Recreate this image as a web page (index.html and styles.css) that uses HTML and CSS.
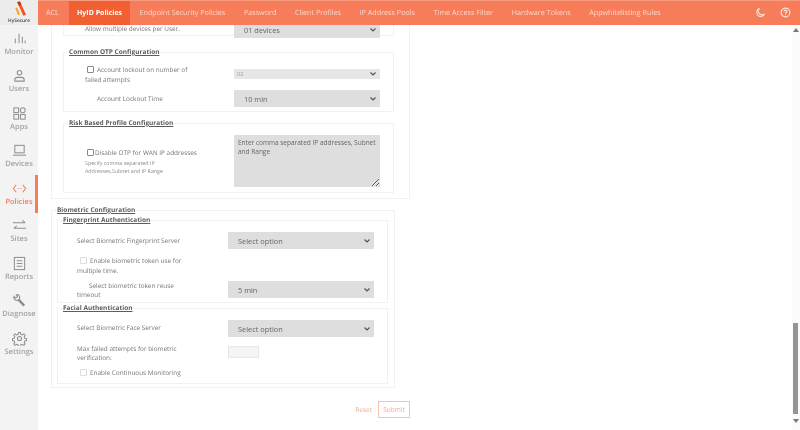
FILE: index.html
```html
<!DOCTYPE html>
<html lang="en">
<head>
<meta charset="utf-8">
<title>HySecure Policies</title>
<link rel="stylesheet" href="styles.css">
</head>
<body>
<div class="app">
  <aside class="sidebar">
    <div class="brand">
      <svg class="logo" viewBox="0 0 20 18"><path d="M7.500 1 10.500 .5 17 14.500 14 15.500 Z" fill="#f0562a"/><path d="M5.500 7.500 7.500 7 10.500 14 8.500 15 Z" fill="#f6a623"/><path d="M7.500 1 10.500 .5 12 4 9.500 5 Z" fill="#b93a18"/></svg>
      <span class="brand-name">HySecure</span>
    </div>
    <nav class="nav">
      <a class="nav-item"><svg viewBox="0 0 16 16"><path d="M3.500 13V8M7.500 13V3M11 13V6M14 13v-3"/></svg><span>Monitor</span></a>
      <a class="nav-item"><svg viewBox="0 0 16 16"><circle cx="8" cy="5" r="2.400"/><path d="M3 14v-1.500c0-1.500 1.500-2.500 3-2.500h4c1.500 0 3 1 3 2.500V14zM3 14h10"/></svg><span>Users</span></a>
      <a class="nav-item"><svg viewBox="0 0 16 16"><rect x="2" y="2" width="5" height="5"/><circle cx="11.500" cy="4.500" r="2.600"/><rect x="2" y="9" width="5" height="5"/><rect x="9" y="9" width="5" height="5"/></svg><span>Apps</span></a>
      <a class="nav-item"><svg viewBox="0 0 16 16"><rect x="3" y="2.500" width="10" height="8"/><path d="M1 13h14"/></svg><span>Devices</span></a>
      <a class="nav-item active"><svg viewBox="0 0 16 16"><path d="M4.500 4 1.500 8l3 4M11.500 4l3 4-3 4M6 8h1M9 8h1"/></svg><span>Policies</span></a>
      <a class="nav-item"><svg viewBox="0 0 16 16"><path d="M1 5h13M11 2.500 14 5M15 11H2M5 8.500 2 11"/></svg><span>Sites</span></a>
      <a class="nav-item"><svg viewBox="0 0 16 16"><rect x="2.500" y="1.500" width="11" height="13"/><path d="M5 5h6M5 8h6M5 11h6"/></svg><span>Reports</span></a>
      <a class="nav-item"><svg viewBox="0 0 16 16"><path class="thick" d="M7 7l6 6.500"/><path d="M2 3.500 4 5.500 6 4 4.500 2C7 1 9 3.500 8 6L6 8C3.500 8.500 1.500 6 2 3.500Z"/></svg><span>Diagnose</span></a>
      <a class="nav-item"><svg viewBox="0 0 16 16"><circle cx="8" cy="8" r="2.200"/><path d="M7 1.500h2l.4 2 1.600.7 1.700-1.100 1.400 1.400-1.100 1.700.7 1.600 1.800.4v2l-1.800.4-.7 1.600 1.100 1.700-1.400 1.400-1.700-1.100-1.600.7-.4 1.800H7l-.4-1.800-1.600-.7-1.700 1.100-1.400-1.400 1.100-1.700-.7-1.600-1.800-.4v-2l1.800-.4.7-1.600-1.100-1.700 1.400-1.400 1.700 1.100 1.600-.7z"/></svg><span>Settings</span></a>
    </nav>
  </aside>
  <div class="workspace">
    <header class="topbar">
      <nav class="tabs">
        <a class="tab">ACL</a>
        <a class="tab current">HyID Policies</a>
        <a class="tab">Endpoint Security Policies</a>
        <a class="tab">Password</a>
        <a class="tab">Client Profiles</a>
        <a class="tab">IP Address Pools</a>
        <a class="tab">Time Access Filter</a>
        <a class="tab">Hardware Tokens</a>
        <a class="tab">Appwhitelisting Rules</a>
      </nav>
      <div class="top-icons">
        <svg viewBox="0 0 12 12"><path d="M5 1.500A4.500 4.500 0 1 0 10.500 7.500 4 4 0 0 1 5 1.500Z"/></svg>
        <svg viewBox="0 0 12 12"><circle cx="6" cy="6" r="4.800"/><path d="M4.500 4.800C4.500 3 7.600 3 7.600 4.800 7.600 6 6 6 6 7.300M6 8.300v.8"/></svg>
      </div>
    </header>
    <main class="content">
      <div class="form-scroll">
        <section class="outer first">
          <fieldset class="group clipped">
            <div class="row row-clipped">
              <label class="label">Allow multiple devices per User.</label>
              <select class="control"><option>01 devices</option></select>
            </div>
          </fieldset>
          <fieldset class="group otp">
            <legend>Common OTP Configuration</legend>
            <div class="row row-lockout">
              <label class="label"><input type="checkbox" class="check">Account lockout on number of<br>failed attempts</label>
              <select class="control small" disabled><option>02</option></select>
            </div>
            <div class="row row-time">
              <label class="label pad">Account Lockout Time</label>
              <select class="control"><option>10 min</option></select>
            </div>
          </fieldset>
          <fieldset class="group risk">
            <legend>Risk Based Profile Configuration</legend>
            <div class="row row-risk">
              <div class="label">
                <label class="wan"><input type="checkbox" class="check tight">Disable OTP for WAN IP addresses</label>
                <p class="hint">Specify comma separated IP<br>Addresses,Subnet and IP Range</p>
              </div>
              <textarea class="control area" placeholder="Enter comma separated IP addresses, Subnet and Range"></textarea>
            </div>
          </fieldset>
        </section>
        <fieldset class="outer bio">
          <legend>Biometric Configuration</legend>
          <fieldset class="group finger">
            <legend>Fingerprint Authentication</legend>
            <div class="row row-server">
              <label class="label">Select Biometric Fingerprint Server</label>
              <select class="control"><option>Select option</option></select>
            </div>
            <div class="row row-token">
              <label class="label"><input type="checkbox" class="check faded">Enable biometric token use for<br>multiple time.</label>
            </div>
            <div class="row row-reuse">
              <label class="label"><span class="indent">Select biometric token reuse</span><br>timeout</label>
              <select class="control"><option>5 min</option></select>
            </div>
          </fieldset>
          <fieldset class="group face">
            <legend>Facial Authentication</legend>
            <div class="row row-face">
              <label class="label">Select Biometric Face Server</label>
              <select class="control"><option>Select option</option></select>
            </div>
            <div class="row row-max">
              <label class="label">Max failed attempts for biometric<br>verification:</label>
              <input type="text" class="number">
            </div>
            <div class="row row-cont">
              <label class="label"><input type="checkbox" class="check faded">Enable Continuous Monitoring</label>
            </div>
          </fieldset>
        </fieldset>
        <div class="actions">
          <a class="reset">Reset</a>
          <button class="submit" type="button">Submit</button>
        </div>
      </div>
      <div class="scrollbar">
        <span class="arrow up"></span>
        <span class="thumb"></span>
        <span class="arrow down"></span>
      </div>
    </main>
  </div>
</div>
</body>
</html>
```
FILE: styles.css
```css
* { box-sizing: border-box; }
html, body { margin: 0; height: 100%; background: #fff; overflow: hidden; }
body { font-family: "Open Sans", "Noto Sans", sans-serif; font-size: 6.400px; color: #757575; text-rendering: geometricPrecision; }
.app { display: flex; width: 800px; height: 430px; filter: blur(0.4px); }

.sidebar { width: 38px; flex: none; background: #f3f3f3; display: flex; flex-direction: column; }
.brand { height: 25px; background: #ececec; display: flex; flex-direction: column; align-items: center; justify-content: flex-end; padding-bottom: 1px; }
.logo { width: 19px; height: 17px; }
.brand-name { font-size: 4.800px; line-height: 6px; color: #444; font-weight: 600; }
.nav { display: flex; flex-direction: column; }
.nav-item { height: 37.5px; display: flex; flex-direction: column; align-items: center; padding-top: 5.500px; font-size: 7.500px; line-height: 11px; color: #a3a3a3; font-weight: 600; position: relative; gap: 1px; white-space: nowrap; }
.nav-item svg { width: 15px; height: 15px; fill: none; stroke: #8f8f8f; stroke-width: 1.100; }
.nav-item svg .thick { stroke-width: 2.600; }
.nav-item.active { color: #f67c5a; }
.nav-item.active svg { stroke: #f67c5a; }
.nav-item.active::after { content: ""; position: absolute; right: 0; top: 0; width: 3px; height: 38px; background: #f67c5a; }

.workspace { flex: 1; min-width: 0; display: flex; flex-direction: column; }
.topbar { height: 25px; flex: none; background: #f67c5a; display: flex; justify-content: space-between; align-items: stretch; border-top: 1px solid #f89a7d; }
.tabs { display: flex; }
.tab { display: flex; align-items: center; padding: 0 9.300px; font-size: 7.200px; color: #fcd6c9; white-space: nowrap; }
.tab:first-child { padding: 0 1px 0 8px; margin-right: 9px; }
.tab.current { background: #f15f32; color: #fff; font-weight: 700; font-size: 7px; padding: 0 8.200px; }
.top-icons { display: flex; align-items: center; gap: 14px; padding: 0 9px 2px 0; }
.top-icons svg { width: 11px; height: 11px; fill: none; stroke: #fde4da; stroke-width: 1.200; }

.content { flex: 1; min-height: 0; position: relative; overflow: hidden; }
.form-scroll { margin-top: -32px; padding-left: 13px; width: 400px; }

.outer { border: 1px solid #f1f1f1; margin: 0; padding: 0; }
.first { width: 359px; height: 206px; padding: 1px 0 0 11px; }
.group { border: 1px solid #f1f1f1; margin: 0; padding: 0; min-width: 0; }
legend { font-weight: 700; text-decoration: underline; color: #5d5d5d; padding: 0; font-size: 6.500px; line-height: 10px; margin-left: 5px; }
.first .group { width: 331px; }
.clipped { height: 41px; }
.otp { height: 65px; margin-top: 11px; }
.risk { height: 75px; margin-top: 6px; }

.row { display: flex; align-items: flex-start; }
.label { display: block; line-height: 10px; width: 150px; flex: none; }
.first .label { margin-left: 21px; width: 149px; }
.control { appearance: none; -webkit-appearance: none; width: 146px; height: 17px; background: #dedede url("data:image/svg+xml,%3Csvg xmlns='http://www.w3.org/2000/svg' width='6' height='4'%3E%3Cpath d='M.5.500 3 3 5.500.500' fill='none' stroke='%23555' stroke-width='1.200'/%3E%3C/svg%3E") no-repeat right 4px center; border: 0; border-radius: 0; font-family: inherit; font-size: 7.400px; color: #666; padding: 0 10px; }
.small { height: 10px; font-size: 5.500px; padding: 0 0 0 3px; color: #999; background-color: #e6e6e6; margin-top: 4px; opacity: 1; }
.row-clipped { padding-top: 25px; }
.row-clipped .label { padding-top: 3px; }
.row-lockout { padding-top: 8px; }
.row-time { padding-top: 5px; }
.pad { padding: 4px 0 0 12px; }
.row-risk { padding-top: 7px; }
.check { appearance: none; -webkit-appearance: none; width: 7px; height: 7px; margin: 0 3px 0 2px; vertical-align: -1px; border: 1px solid #888; border-radius: 1px; background: #fff; }
.tight { margin-right: 1px; }
.faded { opacity: .3; margin-left: 3px; }
.wan { display: block; padding-top: 13px; white-space: nowrap; margin-bottom: 1px; }
.hint { margin: 0; font-size: 5.300px; line-height: 8.300px; color: #8a8a8a; }
.area { height: 52px; padding: 4px 3px 4px 4px; resize: both; font-size: 6.500px; line-height: 8.700px; background-image: none; }
.area::placeholder { color: #666; opacity: 1; }
.indent { padding-left: 12px; }

.bio { width: 344px; height: 183px; margin-top: 6px; padding: 0 0 0 5px; }
.bio > legend { margin-left: 0; }
.bio .group { width: 331px; }
.bio .label { margin-left: 19px; width: 151px; }
.finger { height: 88px; }
.face { height: 81px; margin-top: 0; }
.row-server { padding-top: 7px; }
.row-server .label { padding-top: 4px; }
.row-token { padding-top: 7px; }
.row-reuse { margin-top: 5px; }
.bio .row-reuse .label { line-height: 9px; }
.row-face { padding-top: 7px; }
.row-face .label { padding-top: 3px; }
.row-max { padding-top: 6px; }
.bio .row-max .label { line-height: 9px; padding-top: 1px; }
.row-cont { padding-top: 6px; }
.number { width: 31px; height: 12px; background: #f5f5f5; border: 1px solid #e6e6e6; margin-top: 3px; }

.actions { width: 359px; display: flex; justify-content: flex-end; align-items: center; gap: 6px; margin-top: 13px; }
.reset { color: #f9a78f; font-size: 6.500px; }
.submit { width: 32px; height: 17px; padding: 0; background: #fff; border: 1px solid #fbbfae; color: #f9a78f; font-family: inherit; font-size: 6.500px; }

.scrollbar { position: absolute; right: 0; top: 0; bottom: 0; width: 8px; background: #fafafa; }
.thumb { position: absolute; left: 1px; top: 298px; width: 5px; height: 91px; background: #949494; }
.arrow { position: absolute; left: 1px; width: 0; height: 0; border-left: 3px solid transparent; border-right: 3px solid transparent; }
.up { top: 3px; border-bottom: 4px solid #777; }
.down { bottom: 7px; border-top: 4px solid #777; }
```
